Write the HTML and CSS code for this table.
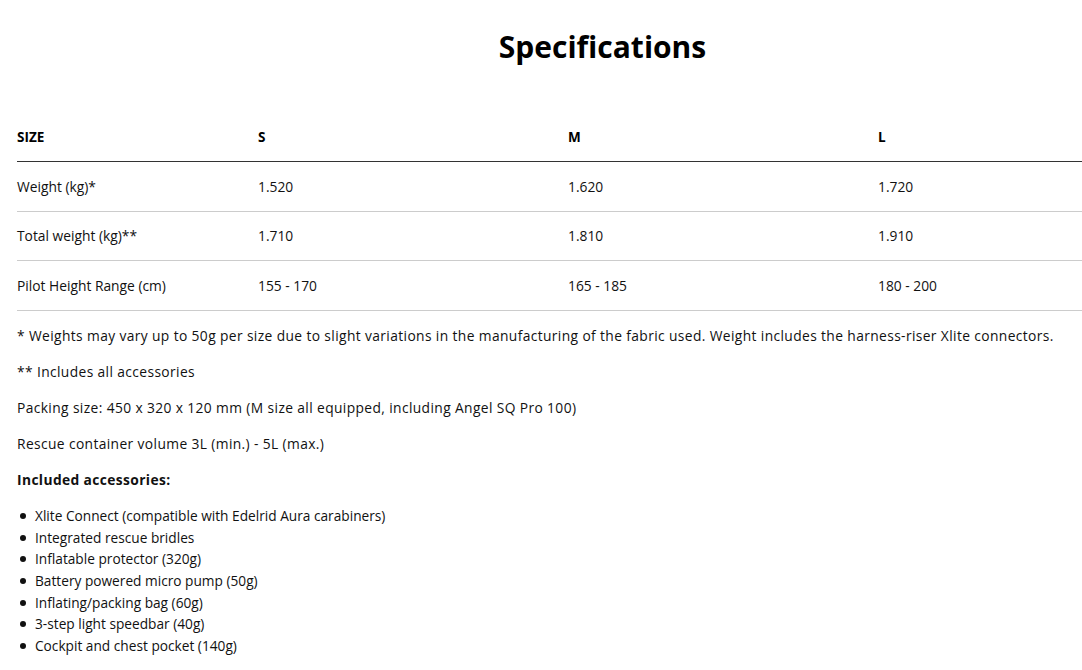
FILE: index.html
```html
<!DOCTYPE html>
<html lang="en">
<head>
<meta charset="utf-8">
<title>Specifications</title>
<link rel="stylesheet" href="styles.css">
</head>
<body>
<div class="page">
  <h2 class="title">Specifications</h2>
  <table class="spec">
    <thead>
      <tr><th class="c1">SIZE</th><th>S</th><th>M</th><th>L</th></tr>
    </thead>
    <tbody>
      <tr><td>Weight (kg)*</td><td>1.520</td><td>1.620</td><td>1.720</td></tr>
      <tr><td>Total weight (kg)**</td><td>1.710</td><td>1.810</td><td>1.910</td></tr>
      <tr><td>Pilot Height Range (cm)</td><td>155 - 170</td><td>165 - 185</td><td>180 - 200</td></tr>
    </tbody>
  </table>
  <div class="notes">
    <p>* Weights may vary up to 50g per size due to slight variations in the manufacturing of the fabric used. Weight includes the harness-riser Xlite connectors.</p>
    <p>** Includes all accessories</p>
    <p>Packing size: 450 x 320 x 120 mm (M size all equipped, including Angel SQ Pro 100)</p>
    <p>Rescue container volume 3L (min.) - 5L (max.)</p>
    <p><strong>Included accessories:</strong></p>
    <ul class="acc">
      <li>Xlite Connect (compatible with Edelrid Aura carabiners)</li>
      <li>Integrated rescue bridles</li>
      <li>Inflatable protector (320g)</li>
      <li>Battery powered micro pump (50g)</li>
      <li>Inflating/packing bag (60g)</li>
      <li>3-step light speedbar (40g)</li>
      <li>Cockpit and chest pocket (140g)</li>
    </ul>
  </div>
</div>
</body>
</html>
```

FILE: styles.css
```css
html, body {
  margin: 0;
  padding: 0;
  overflow: hidden;
  background: #fff;
}
body {
  font-family: "Open Sans", "Noto Sans", sans-serif;
  color: #111;
}
.page {
  width: 1171px;
  margin-left: 17px;
  padding-top: 24px;
}
.title {
  margin: 0;
  text-align: center;
  font-size: 30px;
  font-weight: 700;
  line-height: 46px;
  color: #000;
}
.spec {
  margin-top: 43px;
  width: 1171px;
  border-collapse: collapse;
  table-layout: fixed;
  font-size: 13.8px;
}
.spec th {
  text-align: left;
  font-weight: 700;
  font-size: 13.5px;
  color: #000;
  height: 48px;
  padding: 0;
  vertical-align: middle;
  border-bottom: 1px solid #333;
}
.spec th.c1 { width: 241px; }
.spec td {
  height: 48.67px;
  padding: 0;
  border-bottom: 1px solid #ccc;
  vertical-align: middle;
}
.notes {
  font-size: 13.8px;
  letter-spacing: 0.38px;
  padding-top: 7px;
}
.notes p {
  margin: 0;
  line-height: 36px;
}
.acc {
  list-style: none;
  margin: 0;
  padding: 7px 0 0 0;
  font-size: 13.7px;
  letter-spacing: 0;
  line-height: 21.7px;
}
.acc li {
  display: flex;
  align-items: center;
  gap: 9px;
  padding-left: 3px;
}
.acc li::before {
  content: "";
  width: 6px;
  height: 6px;
  border-radius: 50%;
  background: #111;
  flex: none;
}
```
